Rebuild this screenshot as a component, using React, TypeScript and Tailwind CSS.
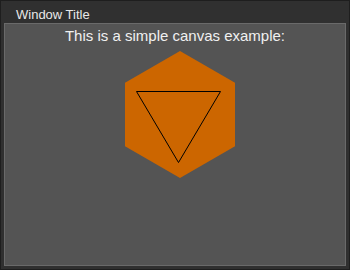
const App = () => {
  return (
    <div
      className="w-[350px] h-[270px] flex flex-col bg-[#303030] border border-[#1e1e1e]"
      style={{ fontFamily: '"Liberation Sans", Arial, sans-serif' }}
    >
      {/* title bar */}
      <div className="h-[22px] pt-[6px] pl-[15px] text-[13px] leading-[15px] text-[#e8e8e8]">
        Window Title
      </div>

      {/* canvas area */}
      <div className="flex-1 mx-[3px] mb-[3px] border border-[#6a6a6a] bg-[#545454] flex flex-col items-center">
        <p className="mt-[3px] text-[15px] leading-[18px] text-[#f0f0f0]">
          This is a simple canvas example:
        </p>
        <svg width="340" height="160" viewBox="0 0 340 160" className="mt-[2px]">
          <polygon
            points="175,4 230,35.75 230,99.25 175,131 120,99.25 120,35.75"
            fill="#cc6600"
          />
          <polygon
            points="131.5,44.5 215.5,44.5 173.5,115.5"
            fill="none"
            stroke="#000"
            strokeWidth="1"
          />
        </svg>
      </div>
    </div>
  );
};

export default App;
